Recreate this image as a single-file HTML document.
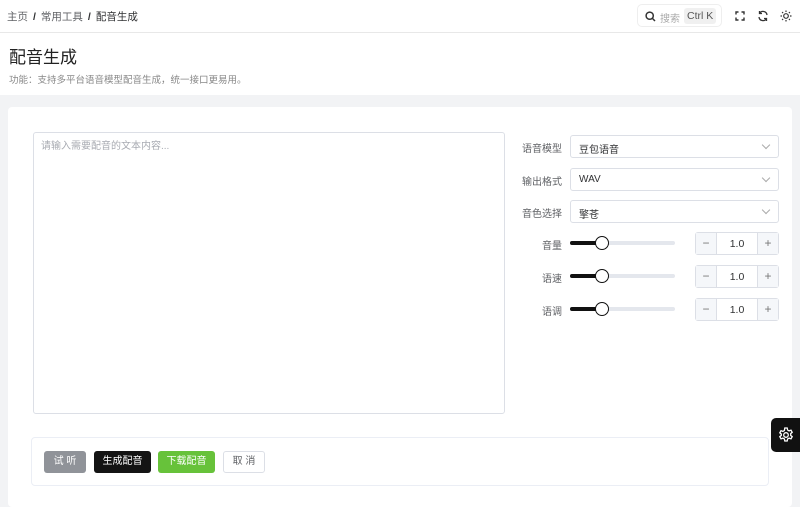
<!DOCTYPE html>
<html><head><meta charset="utf-8"><style>
*{box-sizing:border-box;margin:0;padding:0}
body{width:800px;height:495px;overflow:hidden;background:#f2f3f5;font-family:"Liberation Sans","Noto Sans CJK SC",sans-serif;font-size:12px;color:#303133;position:relative}
.hdr{position:absolute;left:0;top:0;width:800px;height:33px;background:#fff;border-bottom:1px solid #e8e8e8}
.bc{position:absolute;left:7px;top:9px;font-size:10.5px;color:#606266}
.bc b{font-weight:normal;color:#303133}
.bc i{font-style:normal;margin:0 5px;color:#303133;font-weight:bold}
.search{position:absolute;left:637px;top:4px;width:85px;height:23px;border:1px solid #eee;border-radius:5px;background:#fff}
.search span{position:absolute;left:22px;top:5px;font-size:10px;color:#aaa}
.kbd{position:absolute;left:46px;top:3px;background:#f0f0f0;border-radius:3px;padding:2px 3px;font-size:10.5px;color:#555;line-height:12px}
.top{position:absolute;left:0;top:33px;width:800px;height:62px;background:#fff}
.top h1{position:absolute;left:9px;top:10px;font-size:17px;font-weight:normal;color:#222}
.top p{position:absolute;left:9px;top:39px;font-size:9.5px;color:#888}
.card{position:absolute;left:8px;top:107px;width:784px;height:400px;background:#fff;border-radius:4px}
.ta{position:absolute;left:33px;top:132px;width:472px;height:282px;border:1px solid #dcdfe6;border-radius:3px;padding:4px 7px;color:#a8abb2;font-size:10px}
.lbl{position:absolute;width:60px;text-align:right;left:502px;font-size:10px;color:#606266}
.sel{position:absolute;left:570px;width:209px;height:23px;border:1px solid #dcdfe6;border-radius:3px;padding:5px 8px;font-size:10px;color:#303133}
.sel:after{content:"";position:absolute;right:9px;top:6px;width:5px;height:5px;border-right:1px solid #aaa;border-bottom:1px solid #aaa;transform:rotate(45deg)}
.trk{position:absolute;left:570px;width:105px;height:4px;background:#e4e7ed;border-radius:2px}
.trk:before{content:"";position:absolute;left:0;top:0;width:32px;height:4px;background:#111;border-radius:2px}
.trk:after{content:"";position:absolute;left:25px;top:-5px;width:12px;height:12px;border:1.5px solid #111;border-radius:50%;background:#fff}
.num{position:absolute;left:695px;width:84px;height:23px;border:1px solid #dcdfe6;border-radius:3px;font-size:10.5px}
.num .m,.num .p{position:absolute;top:0;width:21px;height:21px;background:#f5f7fa;text-align:center;line-height:21px;color:#777;font-size:12px}
.num .m{left:0;border-right:1px solid #dcdfe6}.num .p{right:0;border-left:1px solid #dcdfe6}
.num .v{position:absolute;left:21px;right:21px;top:5px;text-align:center}
.bar{position:absolute;left:31px;top:437px;width:738px;height:49px;border:1px solid #ebeef5;border-radius:4px;background:#fff}
.btn{position:absolute;top:451px;height:22px;border-radius:3px;font-size:10px;text-align:center;line-height:22px;color:#fff}
.gear{position:absolute;left:771px;top:418px;width:29px;height:34px;background:#111;border-radius:5px 0 0 5px}
</style></head><body>
<div class="hdr">
<div class="bc">主页<i>/</i>常用工具<i>/</i><b>配音生成</b></div>
<div class="search"><svg style="position:absolute;left:7px;top:6px" width="11" height="11" viewBox="0 0 11 11" fill="none" stroke="#333" stroke-width="1.5"><circle cx="4.7" cy="4.7" r="3.6"/><path d="M7.4 7.4L10 10"/></svg><span>搜索</span><div class="kbd">Ctrl K</div></div>
<svg style="position:absolute;left:735px;top:11px" width="10" height="10" viewBox="0 0 10 10" fill="none" stroke="#333" stroke-width="1.4"><path d="M1 3.5V1h2.5M6.5 1H9v2.5M9 6.5V9H6.5M3.5 9H1V6.5"/></svg>
<svg style="position:absolute;left:757px;top:10px" width="12" height="12" viewBox="0 0 12 12" fill="none" stroke="#333" stroke-width="1.3"><path d="M10 5A4 4 0 0 0 2.5 3.5M2 7a4 4 0 0 0 7.5 1.5M2.5 1v2.5H5M9.5 11V8.5H7"/></svg>
<svg style="position:absolute;left:780px;top:10px" width="12" height="12" viewBox="0 0 12 12" fill="none" stroke="#333" stroke-width="1.2"><circle cx="6" cy="6" r="2.3"/><path d="M6 0.5v1.5M6 10v1.5M0.5 6h1.5M10 6h1.5M2.1 2.1l1 1M8.9 8.9l1 1M2.1 9.9l1-1M8.9 3.1l1-1"/></svg>
</div>
<div class="top"><h1>配音生成</h1><p>功能：支持多平台语音模型配音生成，统一接口更易用。</p></div>
<div class="card"></div>
<div class="ta">请输入需要配音的文本内容...</div>
<div class="lbl" style="top:140px">语音模型</div><div class="sel" style="top:135px">豆包语音</div>
<div class="lbl" style="top:173px">输出格式</div><div class="sel" style="top:168px">WAV</div>
<div class="lbl" style="top:205px">音色选择</div><div class="sel" style="top:200px">擎苍</div>
<div class="lbl" style="top:237px">音量</div><div class="trk" style="top:241px"></div><div class="num" style="top:232px"><div class="m">−</div><div class="v">1.0</div><div class="p">+</div></div>
<div class="lbl" style="top:270px">语速</div><div class="trk" style="top:274px"></div><div class="num" style="top:265px"><div class="m">−</div><div class="v">1.0</div><div class="p">+</div></div>
<div class="lbl" style="top:303px">语调</div><div class="trk" style="top:307px"></div><div class="num" style="top:298px"><div class="m">−</div><div class="v">1.0</div><div class="p">+</div></div>
<div class="bar"></div>
<div class="btn" style="left:44px;width:42px;background:#909399">试 听</div>
<div class="btn" style="left:94px;width:57px;background:#141414">生成配音</div>
<div class="btn" style="left:158px;width:57px;background:#67c23a">下载配音</div>
<div class="btn" style="left:223px;width:42px;background:#fff;border:1px solid #dcdfe6;color:#606266;line-height:20px">取 消</div>
<div class="gear"><svg style="position:absolute;left:7px;top:9px" width="16" height="16" viewBox="0 0 16 16" fill="none" stroke="#fff" stroke-width="1.3"><circle cx="8" cy="8" r="2.3"/><path d="M6.8 1h2.4l.4 2 1.5.9 1.9-.7 1.2 2.1-1.5 1.3v1.8l1.5 1.3-1.2 2.1-1.9-.7-1.5.9-.4 2H6.8l-.4-2-1.5-.9-1.9.7-1.2-2.1 1.5-1.3V7.1L1.8 5.8 3 3.7l1.9.7 1.5-.9z"/></svg></div>
</body></html>
